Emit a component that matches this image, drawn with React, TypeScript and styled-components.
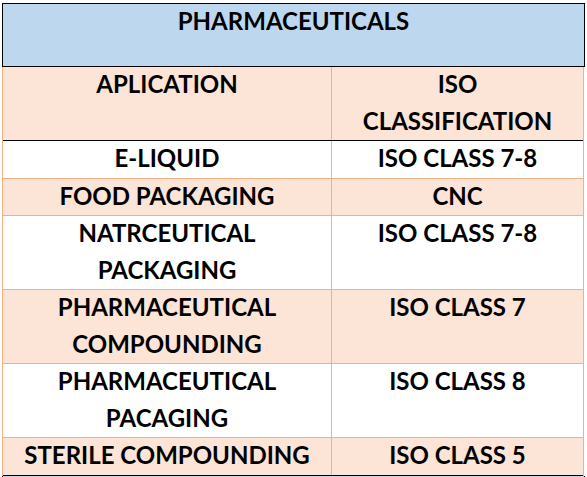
import React from 'react';
import styled, { createGlobalStyle } from 'styled-components';

const GlobalStyle = createGlobalStyle`
  body {
    margin: 0;
    background: #ffffff;
    font-family: 'Lato', 'Noto Sans', sans-serif;
  }
`;

const Page = styled.div`
  padding: 3px 0 0 2px;
  width: 583px;
`;

const TitleBox = styled.div`
  height: 62px;
  border: 1px solid #000000;
  background: #bdd7ee;
`;

const Table = styled.div`
  width: 580px;
  border-left: 1px solid #f4b084;
  border-right: 1px solid #f4b084;
`;

const Row = styled.div<{ shade: boolean; heavy?: boolean }>`
  display: grid;
  grid-template-columns: 328px 1px 251px;
  background: ${props => (props.shade ? '#fce4d6' : '#ffffff')};
  border-bottom: 1px solid ${props => (props.heavy ? '#000000' : '#f4b084')};
`;

const Divider = styled.div`
  background: #f4b084;
`;

// text sits a touch high in its cell, like the spreadsheet it came from
const Cell = styled.div`
  text-align: center;
  font-weight: 700;
  font-size: 24px;
  line-height: 36.5px;
  color: #000000;
  margin-top: -1px;
  padding-bottom: 1px;
`;

const NextBox = styled.div`
  height: 10px;
  border-left: 1px solid #000000;
  border-right: 1px solid #000000;
  background: #bdd7ee;
`;

const rows: { app: React.ReactNode; iso: React.ReactNode }[] = [
  { app: 'E-LIQUID', iso: 'ISO CLASS 7-8' },
  { app: 'FOOD PACKAGING', iso: 'CNC' },
  { app: <>NATRCEUTICAL<br />PACKAGING</>, iso: 'ISO CLASS 7-8' },
  { app: <>PHARMACEUTICAL<br />COMPOUNDING</>, iso: 'ISO CLASS 7' },
  { app: <>PHARMACEUTICAL<br />PACAGING</>, iso: 'ISO CLASS 8' },
  { app: 'STERILE COMPOUNDING', iso: 'ISO CLASS 5' },
];

const App: React.FC = () => {
  return (
    <>
      <GlobalStyle />
      <Page>
        <TitleBox>
          <Cell>PHARMACEUTICALS</Cell>
        </TitleBox>
        <Table>
          <Row shade heavy>
            <Cell>APLICATION</Cell>
            <Divider />
            <Cell>ISO<br />CLASSIFICATION</Cell>
          </Row>
          {rows.map((row, i) => (
            <Row key={i} shade={i % 2 === 1} heavy={i === rows.length - 1}>
              <Cell>{row.app}</Cell>
              <Divider />
              <Cell>{row.iso}</Cell>
            </Row>
          ))}
        </Table>
        <NextBox />
      </Page>
    </>
  );
};

export default App;
